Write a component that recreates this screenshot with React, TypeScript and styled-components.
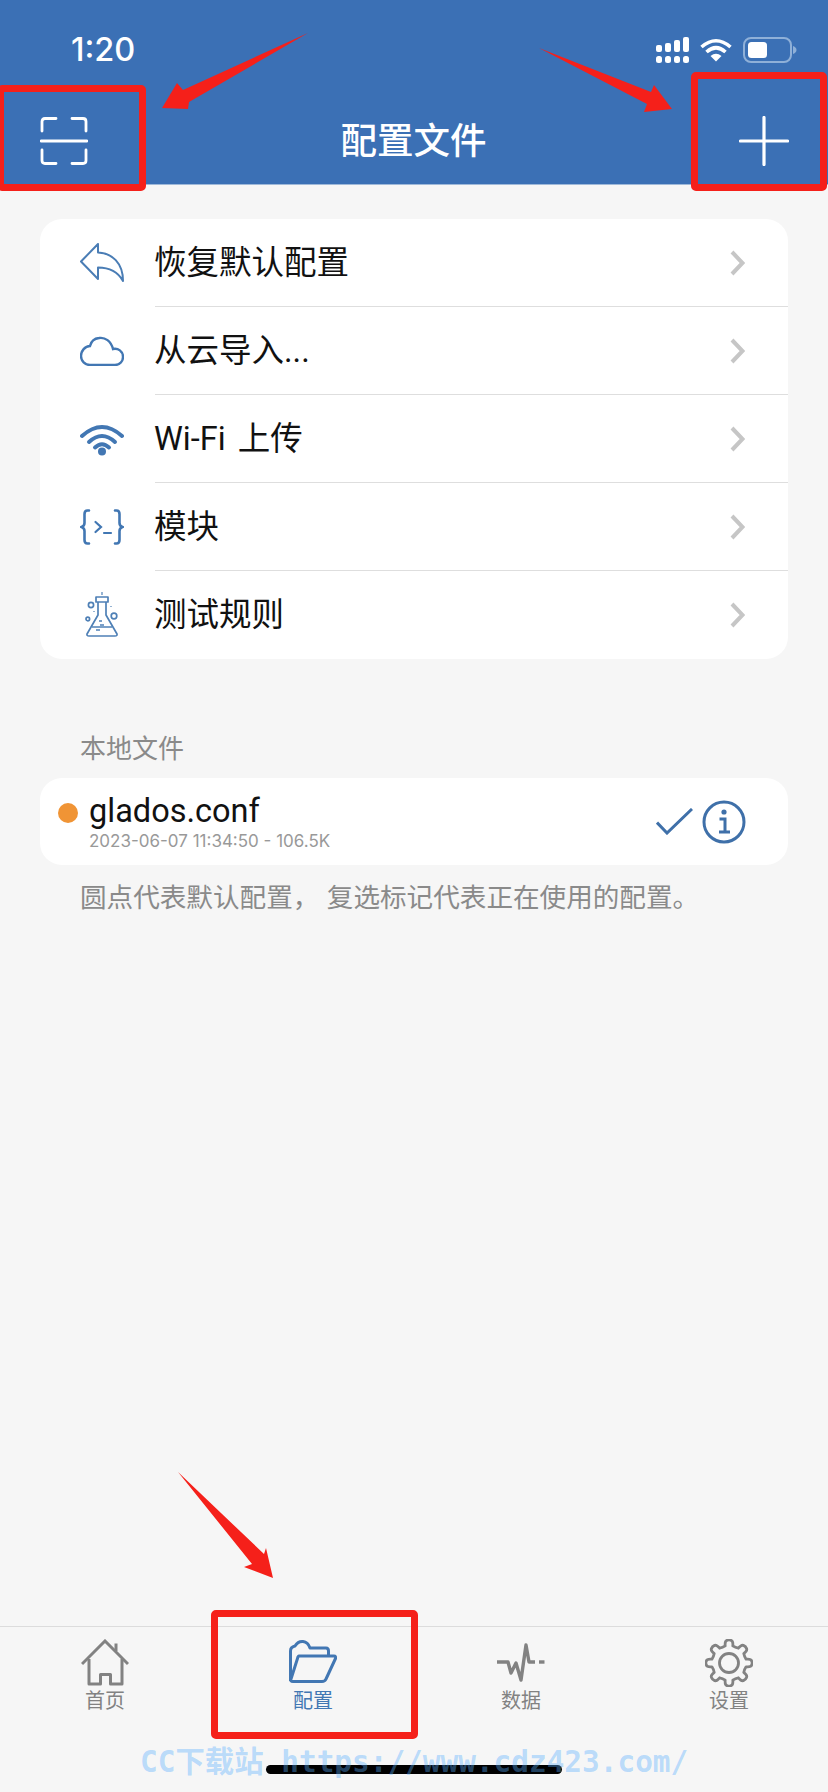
import React from "react";
import styled, { createGlobalStyle } from "styled-components";

const BLUE = "#3b70b5";
const ICON = "#4277b3";
const GRAY = "#828282";
const FONT = `Inter, "Noto Sans CJK SC", sans-serif`;
const ROW_FONT = `Roboto, "Noto Sans CJK SC", sans-serif`;

const Global = createGlobalStyle`
  html, body { margin: 0; padding: 0; background: #f6f6f6; }
  * { box-sizing: border-box; }
`;

const Page = styled.div`
  position: relative;
  width: 828px;
  height: 1792px;
  overflow: hidden;
  display: flex;
  flex-direction: column;
  background: #f6f6f6;
  font-family: ${FONT};
`;

const Header = styled.header`
  background: ${BLUE};
  color: #fff;
  border-bottom: 1px solid #9fb9d9;
`;

const StatusBar = styled.div`
  height: 97px;
  padding: 34px 31px 31px 71px;
  display: flex;
  align-items: center;
  justify-content: space-between;
`;

const Time = styled.span`
  font-size: 32.5px;
  font-weight: 500;
  line-height: 32px;
`;

const StatusIcons = styled.div`
  display: flex;
  align-items: center;
  gap: 11px;
`;

const NavBar = styled.div`
  height: 87px;
  padding: 0 39px 0 40px;
  display: flex;
  align-items: center;
  justify-content: space-between;
`;

const Title = styled.h1`
  margin: 0;
  font-size: 36.5px;
  font-weight: 500;
  line-height: 48px;
`;

const Main = styled.main`
  flex: 1;
  padding: 34px 40px 0;
`;

const Card = styled.section`
  background: #fff;
  border-radius: 22px;
  overflow: hidden;
`;

const Row = styled.div`
  height: 88px;
  display: flex;
  align-items: center;
`;

const IconCell = styled.div`
  width: 115px;
  padding: 0 31px 0 40px;
  display: flex;
  justify-content: center;
  flex-shrink: 0;
`;

const RowBody = styled.div<{ $last?: boolean }>`
  flex: 1;
  height: 100%;
  padding-right: 43px;
  display: flex;
  align-items: center;
  justify-content: space-between;
  border-bottom: ${(p) => (p.$last ? "none" : "1px solid #dedede")};
`;

const RowLabel = styled.span`
  margin-left: -1px;
  font-family: ${ROW_FONT};
  font-size: 32.5px;
  word-spacing: 4px;
  color: #111;
  line-height: 44px;
`;

const SectionLabel = styled.div`
  margin: 72px 0 0 40px;
  font-size: 26px;
  line-height: 36px;
  color: #8a8a8a;
`;

const FileCard = styled(Card)`
  margin-top: 11px;
  height: 87px;
  padding: 0 42px 0 18px;
  display: flex;
  align-items: center;
`;

const Dot = styled.span`
  width: 20px;
  height: 20px;
  border-radius: 50%;
  background: #f09435;
  margin-right: 11px;
  margin-top: -18px;
  flex-shrink: 0;
`;

const FileText = styled.div`
  flex: 1;
  display: flex;
  flex-direction: column;
`;

const FileName = styled.span`
  font-family: ${ROW_FONT};
  font-size: 32.5px;
  line-height: 39px;
  color: #111;
`;

const FileMeta = styled.span`
  font-size: 17px;
  line-height: 20px;
  color: #999;
`;

const FileActions = styled.div`
  display: flex;
  align-items: center;
  gap: 9px;
`;

const Hint = styled.p`
  margin: 14px 0 0 40px;
  font-size: 26.6px;
  line-height: 36px;
  color: #8a8a8a;
`;

const TabBar = styled.nav`
  height: 166px;
  border-top: 1px solid #dcdcdc;
  padding: 12px 0 0;
  display: flex;
  flex-direction: column;
  align-items: center;
`;

const Tabs = styled.div`
  width: 100%;
  padding-left: 1px;
  display: grid;
  grid-template-columns: repeat(4, 208px);
`;

const Tab = styled.div<{ $active?: boolean }>`
  display: flex;
  flex-direction: column;
  align-items: center;
  color: ${(p) => (p.$active ? ICON : GRAY)};
`;

const TabLabel = styled.span`
  margin-top: 1px;
  font-size: 20px;
  line-height: 26px;
`;

const HomeIndicator = styled.div`
  margin-top: 51px;
  width: 296px;
  height: 9px;
  border-radius: 5px;
  background: #000;
`;

const Annotation = styled.div<{ $x: number; $y: number; $w: number; $h: number }>`
  position: absolute;
  left: ${(p) => p.$x}px;
  top: ${(p) => p.$y}px;
  width: ${(p) => p.$w}px;
  height: ${(p) => p.$h}px;
  border: 7px solid #f5201a;
  border-radius: 5px;
`;

const Arrows = styled.svg`
  position: absolute;
  left: 0;
  top: 0;
  pointer-events: none;
`;

const Watermark = styled.div`
  position: absolute;
  left: 140px;
  top: 1742px;
  font-family: "DejaVu Sans Mono", "Noto Sans CJK SC", monospace;
  font-size: 29.4px;
  font-weight: 700;
  line-height: 40px;
  white-space: pre;
  color: rgba(90, 175, 255, 0.4);
`;

const Chevron = () => (
  <svg width="15" height="26" viewBox="0 0 15 26" fill="none" stroke="#c6c6c6" strokeWidth="4">
    <path d="M2 2 L12.5 13 L2 24" />
  </svg>
);

const ReplyIcon = () => (
  <svg width="44" height="40" viewBox="0 0 44 40" fill="none" stroke="#4a7db5" strokeWidth="2" strokeLinejoin="round">
    <path d="M1 18.5 L18 1 V9.5 C32 10 43 20 43 38 C38 29 30 24.500 18 24.500 V36 Z" />
  </svg>
);

const CloudIcon = () => (
  <svg width="44" height="30" viewBox="0 0 44 30" fill="none" stroke={ICON} strokeWidth="2.4">
    <path d="M10 29 H35 C40 29 43 25 43 21 C43 15 38 12 33 13 C31 5 25 1 19 2 C14 2.500 11 6 10 10 C5 10 1 15 1 20 C1 25 5 29 10 29 Z" />
  </svg>
);

const WifiIcon = () => (
  <svg width="44" height="33" viewBox="0 0 44 33" fill="none" stroke={ICON} strokeWidth="4" strokeLinecap="round">
    <path d="M2 13 Q22 -5 42 13" />
    <path d="M9 19 Q22 7 35 19" />
    <path d="M15 24.500 Q22 18 29 24.500" />
    <circle cx="22" cy="28.500" r="4" fill={ICON} stroke="none" />
  </svg>
);

const ModuleIcon = () => (
  <svg width="44" height="36" viewBox="0 0 44 36" fill="none" stroke={ICON} strokeWidth="2.6" strokeLinecap="round">
    <path d="M9 1.500 H7.500 Q4.500 1.500 4.500 5 V14 Q4.500 17 1.500 18 Q4.500 19 4.500 22 V31 Q4.500 34.500 7.500 34.500 H9" />
    <path d="M35 1.500 H36.500 Q39.500 1.500 39.500 5 V14 Q39.500 17 42.500 18 Q39.500 19 39.500 22 V31 Q39.500 34.500 36.500 34.500 H35" />
    <path d="M15.500 13 L21 18 L15.500 23" strokeWidth="2.200" />
    <path d="M24 24 H31" strokeWidth="2.200" />
  </svg>
);

const FlaskIcon = () => (
  <svg width="34" height="46" viewBox="0 0 34 46" fill="none" stroke="#4f80b6" strokeWidth="1.700" strokeLinejoin="round">
    <path d="M11 5 H23 V10 H11 Z" />
    <path d="M13 10 V23 L2 42 Q1.500 44 4 44 H30 Q32.500 44 32 42 L21 23 V10" />
    <path d="M7 35 H27" />
    <path d="M15 33 H19 M14 29 H17 M11 38 H15" strokeWidth="1.300" />
    <circle cx="6" cy="13" r="2.600" />
    <circle cx="2.800" cy="27" r="1.800" />
    <circle cx="29" cy="24" r="2.800" />
    <path d="M17 0 V3 M9 19 V20 M26 14 V15" strokeWidth="1.200" />
  </svg>
);

const ScanIcon = () => (
  <svg width="48" height="48" viewBox="0 0 48 48" fill="none" stroke="#fff" strokeWidth="2.800" strokeLinecap="round">
    <path d="M16 1.500 H5 Q2 1.500 2 4.500 V14" />
    <path d="M32 1.500 H43 Q46 1.500 46 4.500 V14" />
    <path d="M16 46.500 H5 Q2 46.500 2 43.500 V33" />
    <path d="M32 46.500 H43 Q46 46.500 46 43.500 V33" />
    <path d="M1 24 H47" />
  </svg>
);

const PlusIcon = () => (
  <svg width="50" height="50" viewBox="0 0 50 50" fill="none" stroke="#fff" strokeWidth="3.200" strokeLinecap="round">
    <path d="M25 1.500 V48.500 M1.500 25 H48.500" />
  </svg>
);

const SignalIcon = () => (
  <svg width="33" height="26" viewBox="0 0 33 26" fill="#fff">
    <rect x="0" y="8" width="6" height="7" rx="2" />
    <rect x="9" y="6" width="6" height="9" rx="2" />
    <rect x="18" y="3" width="6" height="12" rx="2" />
    <rect x="27" y="0" width="6" height="15" rx="2" />
    <rect x="0" y="19" width="6" height="7" rx="2.500" />
    <rect x="9" y="19" width="6" height="7" rx="2.500" />
    <rect x="18" y="19" width="6" height="7" rx="2.500" />
    <rect x="27" y="19" width="6" height="7" rx="2.500" />
  </svg>
);

const StatusWifi = () => (
  <svg width="32" height="24" viewBox="0 0 32 24" fill="none" stroke="#fff" strokeWidth="3.600">
    <path d="M1.500 9 Q16 -3.500 30.500 9" />
    <path d="M6.500 14 Q16 5.500 25.500 14" />
    <path d="M16 23.500 L10.500 18 Q16 13.500 21.500 18 Z" fill="#fff" stroke="none" />
  </svg>
);

const BatteryIcon = () => (
  <svg width="54" height="26" viewBox="0 0 54 26" fill="none">
    <rect x="1" y="1" width="47" height="24" rx="7" stroke="#8fb0d8" strokeWidth="2" />
    <rect x="5" y="5" width="19" height="16" rx="3.500" fill="#fff" />
    <path d="M50 9 Q53.500 10.500 53.500 13 Q53.500 15.500 50 17 Z" fill="#8fb0d8" />
  </svg>
);

const CheckIcon = () => (
  <svg width="37" height="27" viewBox="0 0 37 27" fill="none" stroke="#3f70a9" strokeWidth="3">
    <path d="M1 14.500 L11 25 L36 1" />
  </svg>
);

const InfoIcon = () => (
  <svg width="44" height="44" viewBox="0 0 44 44" fill="none" stroke="#3f70a9" strokeWidth="3">
    <circle cx="22" cy="22" r="20" />
    <circle cx="22" cy="12" r="2.600" fill="#3f70a9" stroke="none" />
    <path d="M17.500 19 H23 V32 M17 32 H28" />
  </svg>
);

const HomeTabIcon = () => (
  <svg width="48" height="48" viewBox="0 0 48 48" fill="none" stroke="currentColor" strokeWidth="3">
    <path d="M1 25 L24 2 L47 25" />
    <path d="M35 12 V4.500" />
    <path d="M8 20 V45 H19.500 V35.500 H29.500 V45 H41 V20" strokeLinejoin="round" />
  </svg>
);

const FolderTabIcon = () => (
  <svg width="48" height="48" viewBox="0 0 48 48" fill="none" stroke="currentColor" strokeWidth="3" strokeLinejoin="round">
    <path d="M1.500 42 V12 Q1.500 8 6 7 Q9 2 14 2.500 Q19 3 21 9 H37 Q39.500 9 39.500 12 V17" />
    <path d="M10 17 H45 Q47 17 46.500 19.500 L37 40 Q36 42.500 33 42.500 H4 Q1 42.500 2 40 L8.500 19.500 Q9 17 10 17 Z" />
  </svg>
);

const DataTabIcon = () => (
  <svg width="48" height="48" viewBox="0 0 48 48" fill="none" stroke="currentColor" strokeWidth="3.400" strokeLinejoin="round">
    <path d="M0 23 H11 L14 34 L19 24 L24 41 L29 6 L32 23 H38" />
    <path d="M42 23 H47.500" />
  </svg>
);

const gearPath = (() => {
  const teeth = 8;
  const c = 24;
  const pts: string[] = [];
  for (let i = 0; i < teeth; i++) {
    const a = (i * 2 * Math.PI) / teeth - Math.PI / 2;
    const step = (2 * Math.PI) / teeth;
    const point = (r: number, t: number) =>
      `${(c + r * Math.cos(a + t * step)).toFixed(2)} ${(c + r * Math.sin(a + t * step)).toFixed(2)}`;
    pts.push(`${i === 0 ? "M" : "L"}${point(17.5, -0.28)}`);
    pts.push(`Q${point(22.8, -0.24)} ${point(22.8, -0.1)}`);
    pts.push(`Q${point(23.6, 0)} ${point(22.8, 0.1)}`);
    pts.push(`Q${point(22.8, 0.24)} ${point(17.5, 0.28)}`);
    pts.push(`Q${point(16.6, 0.5)} ${point(17.5, 0.72)}`);
  }
  return pts.join(" ") + " Z";
})();

const GearTabIcon = () => (
  <svg width="48" height="48" viewBox="0 0 48 48" fill="none" stroke="currentColor" strokeWidth="2.800" strokeLinejoin="round">
    <path d={gearPath} />
    <circle cx="24" cy="24" r="9.500" />
  </svg>
);

const menu = [
  { label: "恢复默认配置", icon: <ReplyIcon /> },
  { label: "从云导入...", icon: <CloudIcon /> },
  { label: "Wi-Fi 上传", icon: <WifiIcon /> },
  { label: "模块", icon: <ModuleIcon /> },
  { label: "测试规则", icon: <FlaskIcon /> },
];

const tabs = [
  { label: "首页", icon: <HomeTabIcon /> },
  { label: "配置", icon: <FolderTabIcon />, active: true },
  { label: "数据", icon: <DataTabIcon /> },
  { label: "设置", icon: <GearTabIcon /> },
];

const boxes = [
  { x: -3, y: 85, w: 149, h: 106 },
  { x: 691, y: 72, w: 136, h: 119 },
  { x: 211, y: 1610, w: 207, h: 129 },
];

export default function App() {
  return (
    <Page>
      <Global />
      <Header>
        <StatusBar>
          <Time>1:20</Time>
          <StatusIcons>
            <SignalIcon />
            <StatusWifi />
            <BatteryIcon />
          </StatusIcons>
        </StatusBar>
        <NavBar>
          <ScanIcon />
          <Title>配置文件</Title>
          <PlusIcon />
        </NavBar>
      </Header>
      <Main>
        <Card>
          {menu.map((item, i) => (
            <Row key={item.label}>
              <IconCell>{item.icon}</IconCell>
              <RowBody $last={i === menu.length - 1}>
                <RowLabel>{item.label}</RowLabel>
                <Chevron />
              </RowBody>
            </Row>
          ))}
        </Card>
        <SectionLabel>本地文件</SectionLabel>
        <FileCard>
          <Dot />
          <FileText>
            <FileName>glados.conf</FileName>
            <FileMeta>2023-06-07 11:34:50 - 106.5K</FileMeta>
          </FileText>
          <FileActions>
            <CheckIcon />
            <InfoIcon />
          </FileActions>
        </FileCard>
        <Hint>圆点代表默认配置， 复选标记代表正在使用的配置。</Hint>
      </Main>
      <TabBar>
        <Tabs>
          {tabs.map((t) => (
            <Tab key={t.label} $active={t.active}>
              {t.icon}
              <TabLabel>{t.label}</TabLabel>
            </Tab>
          ))}
        </Tabs>
        <HomeIndicator />
      </TabBar>
      {boxes.map((b) => (
        <Annotation key={b.x} $x={b.x} $y={b.y} $w={b.w} $h={b.h} />
      ))}
      <Arrows width="828" height="1792" viewBox="0 0 828 1792" fill="#f5201a">
        <polygon points="308,33 183,90 177,83 162,108 188,109 189,102" />
        <polygon points="539,48 651,92 654,85 672,109 644,112 647,104" />
        <polygon points="178,1472 264,1554 266,1548 273,1578 244,1567 252,1564" />
      </Arrows>
      <Watermark>CC下载站 https://www.cdz423.com/</Watermark>
    </Page>
  );
}
